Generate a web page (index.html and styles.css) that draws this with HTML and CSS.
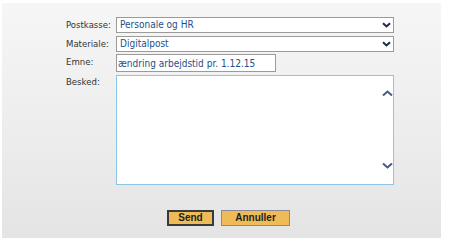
FILE: index.html
```html
<!DOCTYPE html>
<html lang="da">
<head>
<meta charset="utf-8">
<title>Ny besked</title>
<link rel="stylesheet" href="styles.css">
</head>
<body>
<div class="panel">
  <div class="form">
    <div class="label">Postkasse:</div>
    <div class="select">
      <span class="value">Personale og HR</span>
      <svg class="chev" width="9" height="6" viewBox="0 0 9 6"><path d="M1 1.2 L4.5 4.5 L8 1.2" fill="none" stroke="#1e2a48" stroke-width="2"/></svg>
    </div>
    <div class="label">Materiale:</div>
    <div class="select">
      <span class="value">Digitalpost</span>
      <svg class="chev" width="9" height="6" viewBox="0 0 9 6"><path d="M1 1.2 L4.5 4.5 L8 1.2" fill="none" stroke="#1e2a48" stroke-width="2"/></svg>
    </div>
    <div class="label">Emne:</div>
    <div class="input"><span class="value">ændring arbejdstid pr. 1.12.15</span></div>
    <div class="label label-top">Besked:</div>
    <div class="textarea">
      <div class="scroll">
        <svg width="11" height="7" viewBox="0 0 11 7"><path d="M1 5.5 L5.5 1.5 L10 5.5" fill="none" stroke="#4a5a84" stroke-width="2"/></svg>
        <svg width="11" height="7" viewBox="0 0 11 7"><path d="M1 1.5 L5.5 5.5 L10 1.5" fill="none" stroke="#4a5a84" stroke-width="2"/></svg>
      </div>
    </div>
  </div>
  <div class="buttons">
    <button class="btn btn-primary">Send</button>
    <button class="btn btn-secondary">Annuller</button>
  </div>
</div>
</body>
</html>
```
FILE: styles.css
```css
html, body {
  margin: 0;
  padding: 0;
  background: #ffffff;
}
body {
  font-family: "DejaVu Sans Condensed", "DejaVu Sans", sans-serif;
  font-size: 9.5px;
  color: #333333;
}
.panel {
  margin: 3px 13px 0 2px;
  height: 235px;
  box-sizing: border-box;
  padding: 14px 0 0 64px;
  background: linear-gradient(to bottom, #f6f6f6 0%, #ececec 60%, #e4e4e4 100%);
}
.form {
  display: grid;
  grid-template-columns: 50px 278px;
  grid-template-rows: 16px 16px 17px 110px;
  row-gap: 3px;
}
.form > :nth-child(5), .form > :nth-child(6) { margin-top: -1px; }
.label {
  padding-top: 2px;
  line-height: 12px;
  color: #333333;
}
.label-top { padding-top: 1px; }
.select, .input, .textarea {
  box-sizing: border-box;
  background: #ffffff;
}
.select {
  border: 1px solid #9a9a9a;
  display: flex;
  align-items: center;
  justify-content: space-between;
  padding: 0 2px 0 3px;
}
.value {
  color: #1f4f8a;
  font-size: 10px;
  line-height: 12px;
}
.chev { display: block; }
.input {
  width: 160px;
  border: 1px solid #9a9a9a;
  padding: 1px 0 0 1px;
  display: flex;
  align-items: center;
}
.textarea {
  border: 1px solid #8cc6e6;
  display: flex;
  justify-content: flex-end;
}
.scroll {
  display: flex;
  flex-direction: column;
  justify-content: space-between;
  padding: 14px 0 15px 0;
}
.scroll svg { display: block; }
.buttons {
  display: flex;
  gap: 7px;
  padding-left: 101px;
  margin-top: 25px;
}
.btn {
  box-sizing: border-box;
  height: 16px;
  margin: 0;
  padding: 0;
  font-family: "Liberation Sans", Arial, sans-serif;
  font-weight: bold;
  font-size: 10px;
  line-height: 12px;
  color: #1e1e1e;
  background: #eebb58;
  cursor: pointer;
}
.btn-primary {
  width: 47px;
  border: 2px solid #3a3a3a;
}
.btn-secondary {
  width: 69px;
  border: 1px solid #8a8a96;
}
```
